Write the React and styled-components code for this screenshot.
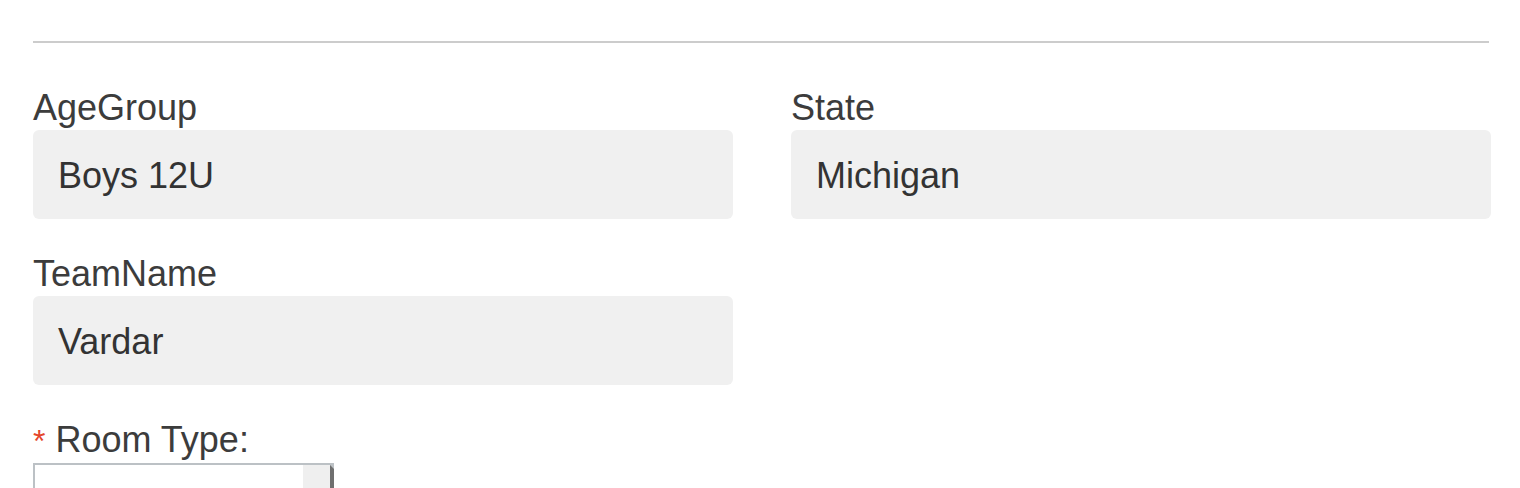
import styled, { createGlobalStyle } from "styled-components";

const GlobalStyle = createGlobalStyle`
  body {
    margin: 0;
    background: #ffffff;
    font-family: "Liberation Sans", Arial, Helvetica, sans-serif;
    color: #333333;
  }
`;

const Page = styled.div`
  padding: 41px 31px 0 33px;
`;

const Rule = styled.hr`
  margin: 0;
  border: 0;
  border-top: 2px solid #cccccc;
`;

const Grid = styled.div`
  display: grid;
  grid-template-columns: 700px 700px;
  column-gap: 58px;
  row-gap: 35px;
  padding-top: 45px;
`;

const Field = styled.div`
  display: flex;
  flex-direction: column;
`;

const Label = styled.label`
  font-size: 36px;
  line-height: 40px;
  color: #3c3c3c;
  margin-bottom: 2px;
`;

const Input = styled.div`
  height: 89px;
  box-sizing: border-box;
  background: #f0f0f0;
  border-radius: 6px;
  padding: 2px 0 0 25px;
  display: flex;
  align-items: center;
  font-size: 36px;
  color: #333333;
`;

const Required = styled.span`
  color: #e4452b;
  margin-right: 10px;
  font-size: 32px;
`;

const RoomField = styled(Field)`
  margin-top: 35px;
`;

const Select = styled.div`
  width: 301px;
  height: 60px;
  box-sizing: border-box;
  border-top: 2px solid #bcc1c5;
  border-left: 2px solid #bcc1c5;
  display: flex;
  justify-content: flex-end;
  background: #ffffff;
`;

const SelectButton = styled.div`
  width: 27px;
  background: #efefef;
  border-right: 4px solid #6f6f6f;
  position: relative;
  &::before {
    content: "";
    position: absolute;
    top: 0;
    right: -4px;
    border-top: 4px solid #bcc1c5;
    border-left: 4px solid transparent;
  }
`;

export default function App() {
  return (
    <>
      <GlobalStyle />
      <Page>
        <Rule />
        <Grid>
          <Field>
            <Label>AgeGroup</Label>
            <Input>Boys 12U</Input>
          </Field>
          <Field>
            <Label>State</Label>
            <Input>Michigan</Input>
          </Field>
          <Field>
            <Label>TeamName</Label>
            <Input>Vardar</Input>
          </Field>
        </Grid>
        <RoomField>
          <Label>
            <Required>*</Required>Room Type:
          </Label>
          <Select>
            <SelectButton />
          </Select>
        </RoomField>
      </Page>
    </>
  );
}
